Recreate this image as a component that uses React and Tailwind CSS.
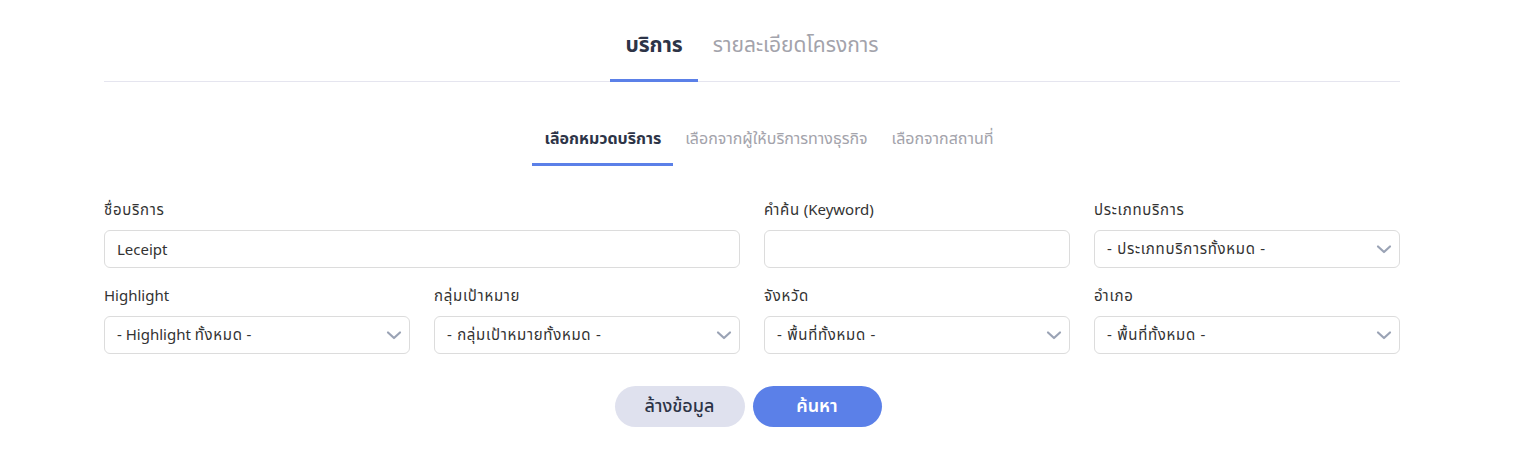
import React from "react";

// thai text renders a bit narrower here than in the screenshot, so space it out
const T = ({children}) => <span className="tracking-[0.7px]">{children}</span>;

const Chevron = () => (
    <svg width="16" height="16" viewBox="0 0 16 16" fill="none" className="shrink-0">
        <path d="M2 5.5L8 11L14 5.5" stroke="#9aa3b5" strokeWidth="2.2" strokeLinecap="round" strokeLinejoin="round"/>
    </svg>
);

const Field = ({label, children, className = ""}) => (
    <div className={`flex flex-col gap-[8px] ${className}`}>
        <label className="text-[15px] leading-[22px] text-[#333]">{label}</label>
        {children}
    </div>
);

const Select = ({children}) => (
    <div className="h-[38px] border border-[#dcdcdc] rounded-[6px] bg-white flex items-center justify-between pl-[12px] pr-[7px]">
        <span className="text-[15px] text-[#333] pt-[2px]">{children}</span>
        <Chevron/>
    </div>
);

export default function App() {
    return (
        <div className="bg-white min-h-[450px] font-['Noto_Sans_Thai','Noto_Sans',sans-serif]">
            <div className="ml-[104px] w-[1296px] pt-[20px]">
                {/* main tabs */}
                <div className="flex justify-center border-b border-[#e5e5ef]">
                    <button className="px-[15px] h-[62px] pb-[8px] text-[21px] font-bold text-[#2d3447] border-b-[3px] border-[#5b80e8] -mb-px">
                        บริการ
                    </button>
                    <button className="px-[15px] h-[62px] pb-[8px] text-[21px] text-[#a3a3ab] border-b-[3px] border-transparent -mb-px">
                        รายละเอียดโครงการ
                    </button>
                </div>

                {/* sub tabs */}
                <div className="flex justify-center mt-[38px] ml-[34px]">
                    <button className="px-[12px] h-[46px] pb-[5px] text-[16px] font-bold text-[#2d3447] border-b-[3px] border-[#5b80e8]">
                        เลือกหมวดบริการ
                    </button>
                    <button className="px-[12px] h-[46px] pb-[5px] text-[16px] text-[#a3a3ab] border-b-[3px] border-transparent">
                        เลือกจากผู้ให้บริการทางธุรกิจ
                    </button>
                    <button className="px-[12px] h-[46px] pb-[5px] text-[16px] text-[#a3a3ab] border-b-[3px] border-transparent">
                        เลือกจากสถานที่
                    </button>
                </div>

                {/* form */}
                <div className="grid grid-cols-4 gap-x-[24px] gap-y-[18px] mt-[34px]">
                    <Field label={<T>ชื่อบริการ</T>} className="col-span-2">
                        <input defaultValue="Leceipt" className="h-[38px] border border-[#dcdcdc] rounded-[6px] px-[12px] pt-[2px] text-[15px] text-[#333] outline-none"/>
                    </Field>
                    <Field label={<><T>คำค้น</T> (Keyword)</>}>
                        <input className="h-[38px] border border-[#dcdcdc] rounded-[6px] px-[12px] text-[15px] text-[#333] outline-none"/>
                    </Field>
                    <Field label={<T>ประเภทบริการ</T>}>
                        <Select><T>- ประเภทบริการทั้งหมด -</T></Select>
                    </Field>
                    <Field label="Highlight">
                        <Select>- Highlight <T>ทั้งหมด</T> -</Select>
                    </Field>
                    <Field label={<T>กลุ่มเป้าหมาย</T>}>
                        <Select><T>- กลุ่มเป้าหมายทั้งหมด -</T></Select>
                    </Field>
                    <Field label={<T>จังหวัด</T>}>
                        <Select><T>- พื้นที่ทั้งหมด -</T></Select>
                    </Field>
                    <Field label={<T>อำเภอ</T>}>
                        <Select><T>- พื้นที่ทั้งหมด -</T></Select>
                    </Field>
                </div>

                {/* buttons */}
                <div className="flex justify-center gap-[8px] mt-[32px] mr-[8px]">
                    <button className="w-[130px] h-[41px] rounded-full bg-[#dfe1ee] text-[18px] font-medium text-[#2d3447]">
                        ล้างข้อมูล
                    </button>
                    <button className="w-[129px] h-[41px] rounded-full bg-[#5b80e8] text-[18px] font-semibold text-white">
                        ค้นหา
                    </button>
                </div>
            </div>
        </div>
    );
}
